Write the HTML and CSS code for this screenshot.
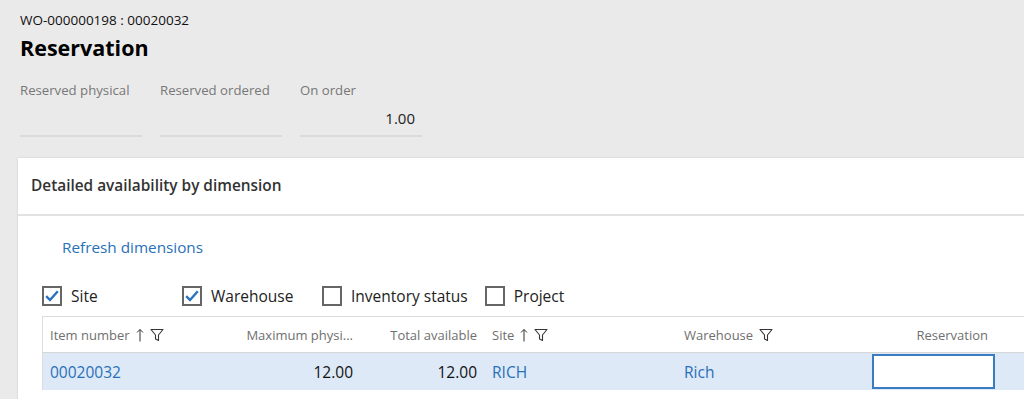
FILE: index.html
```html
<!DOCTYPE html>
<html lang="en">
<head>
<meta charset="utf-8">
<title>Reservation</title>
<link rel="stylesheet" href="styles.css">
</head>
<body>
<div class="page-head">
  <div class="crumb">WO-000000198 : 00020032</div>
  <h1 class="title">Reservation</h1>
  <div class="fields">
    <div class="field">
      <div class="field-label">Reserved physical</div>
      <div class="field-value"></div>
    </div>
    <div class="field">
      <div class="field-label">Reserved ordered</div>
      <div class="field-value"></div>
    </div>
    <div class="field">
      <div class="field-label">On order</div>
      <div class="field-value">1.00</div>
    </div>
  </div>
</div>

<section class="card">
  <div class="card-head">Detailed availability by dimension</div>
  <div class="card-body">
    <a class="link" href="#">Refresh dimensions</a>
    <div class="checks">
      <label class="check"><span class="box checked"><svg viewBox="0 0 16 16" width="16" height="16"><path d="M2.2 8.2 L6 12 L13.8 3.2" fill="none" stroke="#2b72c0" stroke-width="2.4"/></svg></span><span>Site</span></label>
      <label class="check"><span class="box checked"><svg viewBox="0 0 16 16" width="16" height="16"><path d="M2.2 8.2 L6 12 L13.8 3.2" fill="none" stroke="#2b72c0" stroke-width="2.4"/></svg></span><span>Warehouse</span></label>
      <label class="check"><span class="box"></span><span>Inventory status</span></label>
      <label class="check"><span class="box"></span><span>Project</span></label>
    </div>
    <div class="grid">
      <div class="row head">
        <div class="cell">Item number <svg class="ico" viewBox="0 0 8 14" width="8" height="14"><path d="M4 13.5 V1.5 M1 4.5 L4 1.5 L7 4.5" fill="none" stroke="#333" stroke-width="1"/></svg><svg class="ico" viewBox="0 0 14 14" width="14" height="14"><path d="M1 1.5 H13 L8.5 7 V12.5 L5.5 11 V7 Z" fill="none" stroke="#333" stroke-width="1.1" stroke-linejoin="round"/></svg></div>
        <div class="cell num">Maximum physi...</div>
        <div class="cell num">Total available</div>
        <div class="cell">Site <svg class="ico" viewBox="0 0 8 14" width="8" height="14"><path d="M4 13.5 V1.5 M1 4.5 L4 1.5 L7 4.5" fill="none" stroke="#333" stroke-width="1"/></svg><svg class="ico" viewBox="0 0 14 14" width="14" height="14"><path d="M1 1.5 H13 L8.5 7 V12.5 L5.5 11 V7 Z" fill="none" stroke="#333" stroke-width="1.1" stroke-linejoin="round"/></svg></div>
        <div class="cell">Warehouse <svg class="ico" viewBox="0 0 14 14" width="14" height="14"><path d="M1 1.5 H13 L8.5 7 V12.5 L5.5 11 V7 Z" fill="none" stroke="#333" stroke-width="1.1" stroke-linejoin="round"/></svg></div>
        <div class="cell num res">Reservation</div>
      </div>
      <div class="row data">
        <div class="cell"><a class="link-cell" href="#">00020032</a></div>
        <div class="cell num">12.00</div>
        <div class="cell num">12.00</div>
        <div class="cell"><a class="link-cell" href="#">RICH</a></div>
        <div class="cell"><a class="link-cell" href="#">Rich</a></div>
        <div class="cell input-cell"><input class="res-input" type="text"></div>
      </div>
    </div>
  </div>
</section>
</body>
</html>
```

FILE: styles.css
```css
* { box-sizing: border-box; }
html, body { margin: 0; padding: 0; }
body {
  background: #eaeaea;
  font-family: "Open Sans", "Noto Sans", sans-serif;
  color: #000;
  height: 399px;
  overflow: hidden;
}
.page-head {
  padding: 12px 20px 0;
}
.crumb {
  font-size: 13.5px;
  line-height: 16px;
  color: #111;
}
.title {
  margin: 6px 0 0;
  font-size: 21.5px;
  line-height: 28px;
  font-weight: 700;
}
.fields {
  display: flex;
  gap: 18px;
  margin-top: 19px;
}
.field { width: 122px; }
.field-label {
  font-size: 13.2px;
  line-height: 18px;
  color: #777;
}
.field-value {
  height: 32px;
  margin-top: 6px;
  border-bottom: 2px solid #dadada;
  text-align: right;
  padding: 3px 7px 0 0;
  font-size: 15px;
  line-height: 20px;
  color: #222;
}
.card {
  margin: 21px 0 0 18px;
  background: #fff;
  box-shadow: 0 0 2px rgba(0,0,0,0.15);
  height: 260px;
}
.card-head {
  height: 58px;
  border-bottom: 2px solid #e2e2e2;
  padding: 18px 0 0 13px;
  font-size: 15.4px;
  line-height: 20px;
  font-weight: 600;
  color: #333;
}
.card-body {
  padding: 20px 0 0 24px;
}
.link {
  display: inline-block;
  margin-left: 20px;
  font-size: 15.3px;
  line-height: 20px;
  color: #2870b8;
  text-decoration: none;
}
.checks {
  display: flex;
  margin-top: 28px;
}
.check {
  display: flex;
  align-items: center;
  gap: 9px;
  min-width: 123px;
  margin-right: 17px;
  font-size: 15.5px;
  line-height: 20px;
  color: #222;
}
.box {
  width: 20px;
  height: 20px;
  border: 2px solid #666;
  display: flex;
  align-items: center;
  justify-content: center;
  background: #fff;
}
.grid {
  margin-top: 10px;
  border-top: 1px solid #dcdcdc;
  border-left: 1px solid #dcdcdc;
}
.row {
  display: grid;
  grid-template-columns: 157px 161px 124px 192px 192px 131px;
  align-items: center;
}
.row.head {
  height: 36px;
  border-bottom: 1px solid #d6d6d6;
  font-size: 13px;
  color: #6f6f6f;
}
.row.data {
  height: 37px;
  background: #dde9f6;
  font-size: 15.5px;
  color: #111;
}
.cell {
  padding: 0 8px 0 7px;
  white-space: nowrap;
  display: flex;
  align-items: center;
  gap: 6px;
}
.cell.num { justify-content: flex-end; }
.cell.res { padding-right: 12px; }
.ico { display: block; }
.link-cell {
  color: #2870b8;
  text-decoration: none;
}
.input-cell { padding: 0 0 0 3px; align-self: start; }
.res-input {
  width: 123px;
  height: 35px;
  margin-top: 1px;
  border: 2px solid #3a7cc0;
  background: #fff;
  outline: none;
}
```
